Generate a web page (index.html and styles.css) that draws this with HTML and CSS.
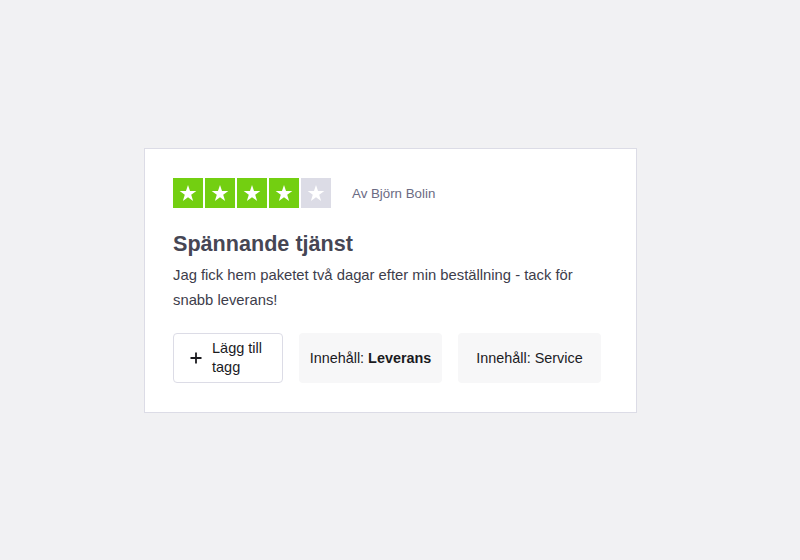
FILE: index.html
```html
<!DOCTYPE html>
<html lang="sv">
<head>
<meta charset="utf-8">
<title>Recension</title>
<link rel="stylesheet" href="styles.css">
</head>
<body>
<div class="page">
  <article class="card">
    <div class="meta">
      <div class="stars">
        <span class="star on"><svg viewBox="0 0 24 24"><path d="M12 3.2l2.2 6.6h6.9l-5.6 4.1 2.1 6.7L12 16.5l-5.6 4.1 2.1-6.7-5.6-4.1h6.9z"/></svg></span>
        <span class="star on"><svg viewBox="0 0 24 24"><path d="M12 3.2l2.2 6.6h6.9l-5.6 4.1 2.1 6.7L12 16.5l-5.6 4.1 2.1-6.7-5.6-4.1h6.9z"/></svg></span>
        <span class="star on"><svg viewBox="0 0 24 24"><path d="M12 3.2l2.2 6.6h6.9l-5.6 4.1 2.1 6.7L12 16.5l-5.6 4.1 2.1-6.7-5.6-4.1h6.9z"/></svg></span>
        <span class="star on"><svg viewBox="0 0 24 24"><path d="M12 3.2l2.2 6.6h6.9l-5.6 4.1 2.1 6.7L12 16.5l-5.6 4.1 2.1-6.7-5.6-4.1h6.9z"/></svg></span>
        <span class="star off"><svg viewBox="0 0 24 24"><path d="M12 3.2l2.2 6.6h6.9l-5.6 4.1 2.1 6.7L12 16.5l-5.6 4.1 2.1-6.7-5.6-4.1h6.9z"/></svg></span>
      </div>
      <span class="author">Av Björn Bolin</span>
    </div>
    <h2 class="title">Spännande tjänst</h2>
    <p class="body">Jag fick hem paketet två dagar efter min beställning - tack för snabb leverans!</p>
    <div class="tags">
      <button class="add-tag" type="button">
        <svg class="plus" viewBox="0 0 12 12"><path d="M6 0.5v11M0.5 6h11"/></svg>
        <span>Lägg till tagg</span>
      </button>
      <span class="tag">Innehåll: <b>Leverans</b></span>
      <span class="tag">Innehåll: Service</span>
    </div>
  </article>
</div>
</body>
</html>
```
FILE: styles.css
```css
html, body {
  margin: 0;
  padding: 0;
}
body {
  background: #f1f1f3;
  font-family: "Liberation Sans", Arial, sans-serif;
  width: 800px;
  height: 560px;
}
.page {
  padding-top: 148px;
  padding-left: 144px;
}
.card {
  box-sizing: border-box;
  width: 493px;
  background: #ffffff;
  border: 1px solid #dcdce6;
  padding: 29px 28px 29px 28px;
}
.meta {
  display: flex;
  align-items: center;
  gap: 21px;
}
.stars {
  display: flex;
  gap: 2px;
}
.star {
  width: 30px;
  height: 30px;
  display: flex;
  align-items: center;
  justify-content: center;
}
.star svg {
  width: 22px;
  height: 22px;
  fill: #ffffff;
}
.star.on { background: #73cf11; }
.star.off { background: #dcdce6; }
.author {
  font-size: 13.3px;
  color: #6b6b83;
}
.title {
  margin: 23px 0 0 0;
  font-size: 21.6px;
  line-height: 26px;
  font-weight: 700;
  color: #464654;
}
.body {
  margin: 6px 0 0 0;
  font-size: 14.8px;
  line-height: 25px;
  color: #3d3d4b;
}
.tags {
  display: flex;
  gap: 16px;
  margin-top: 20px;
}
.add-tag {
  box-sizing: border-box;
  width: 110px;
  height: 50px;
  display: flex;
  align-items: center;
  gap: 10px;
  padding: 0 16px;
  background: #ffffff;
  border: 1px solid #dcdce6;
  border-radius: 4px;
  font-family: inherit;
  font-size: 14.5px;
  line-height: 19px;
  color: #1b1b1f;
  text-align: left;
}
.plus {
  width: 12px;
  height: 12px;
  flex: none;
  stroke: #1b1b1f;
  stroke-width: 1.8;
}
.tag {
  box-sizing: border-box;
  width: 143px;
  height: 50px;
  display: flex;
  align-items: center;
  justify-content: center;
  background: #f7f7f8;
  border-radius: 4px;
  font-size: 14.4px;
  color: #1b1b1f;
  white-space: nowrap;
}
.tag b { font-weight: 700; margin-left: 4px; }
```
